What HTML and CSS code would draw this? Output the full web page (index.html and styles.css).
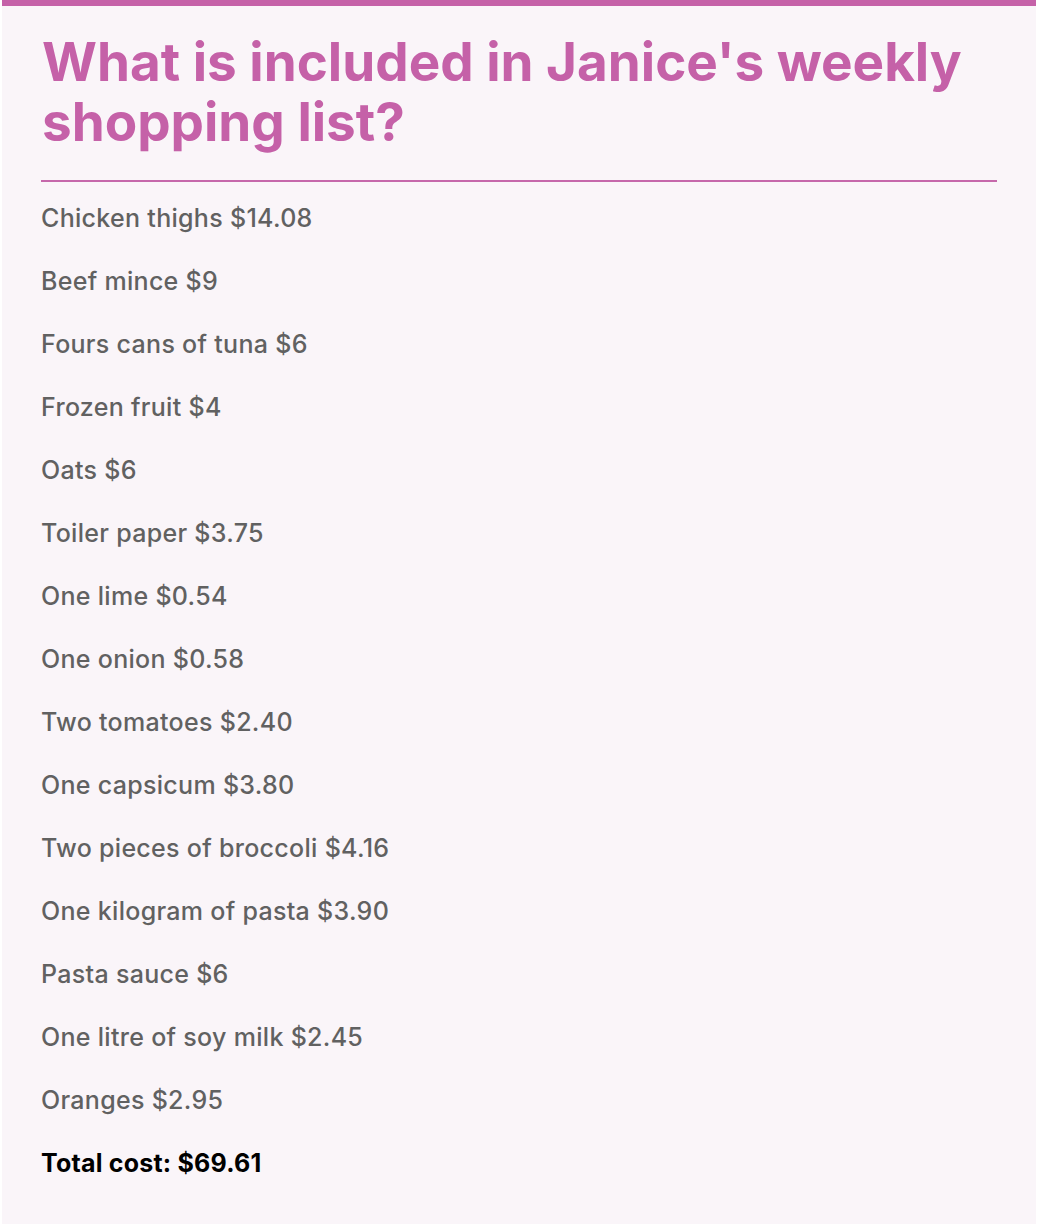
FILE: index.html
```html
<!DOCTYPE html>
<html lang="en">
<head>
<meta charset="utf-8">
<title>Janice's weekly shopping list</title>
<link rel="stylesheet" href="styles.css">
</head>
<body>
<main class="card">
  <h1 class="title">What is included in Janice's weekly shopping list?</h1>
  <hr class="rule">
  <ul class="list">
    <li class="item">Chicken thighs $14.08</li>
    <li class="item">Beef mince $9</li>
    <li class="item">Fours cans of tuna $6</li>
    <li class="item">Frozen fruit $4</li>
    <li class="item">Oats $6</li>
    <li class="item">Toiler paper $3.75</li>
    <li class="item">One lime $0.54</li>
    <li class="item">One onion $0.58</li>
    <li class="item">Two tomatoes $2.40</li>
    <li class="item">One capsicum $3.80</li>
    <li class="item">Two pieces of broccoli $4.16</li>
    <li class="item">One kilogram of pasta $3.90</li>
    <li class="item">Pasta sauce $6</li>
    <li class="item">One litre of soy milk $2.45</li>
    <li class="item">Oranges $2.95</li>
    <li class="item total">Total cost: $69.61</li>
  </ul>
</main>
</body>
</html>
```
FILE: styles.css
```css
html, body {
  margin: 0;
  padding: 0;
  background: #ffffff;
}
body {
  font-family: Inter, "Liberation Sans", sans-serif;
}
.card {
  margin: 0 2px;
  min-height: 1224px;
  box-sizing: border-box;
  background: #faf5f9;
  border-top: 6px solid #c561a8;
  padding: 26px 39px 0 39px;
}
.title {
  margin: 0 0 0 1px;
  color: #c561a8;
  font-size: 53px;
  font-weight: 700;
  line-height: 60px;
  letter-spacing: 0;
}
.rule {
  margin: 28px 0 0 0;
  border: 0;
  height: 2px;
  background: #c668ab;
}
.list {
  list-style: none;
  margin: 5px 0 0 0;
  padding: 0;
}
.item {
  height: 63px;
  line-height: 63px;
  font-size: 25px;
  font-weight: 500;
  color: #616161;
  letter-spacing: 0.3px;
}
.total {
  color: #000000;
  font-weight: 700;
  letter-spacing: 0.2px;
}
```
